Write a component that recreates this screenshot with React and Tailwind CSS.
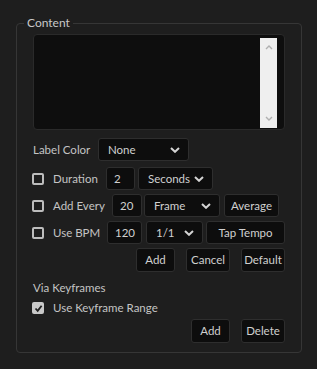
import React from 'react';

const font = { fontFamily: 'Lato, "Liberation Sans", sans-serif' };

function Chevron({ className = '' }) {
  return (
    <svg width="10" height="6" viewBox="0 0 10 6" className={className}>
      <polyline points="1,1 5,4.8 9,1" fill="none" stroke="#d4d4d4" strokeWidth="2" />
    </svg>
  );
}

function Box({ className = '', children }) {
  return (
    <div className={`flex items-center h-[23px] bg-[#0d0d0d] border border-[#2e2e2e] rounded-[3px] text-[#d0d0d0] ${className}`}>
      {children}
    </div>
  );
}

function Select({ label, className = '' }) {
  return (
    <Box className={`justify-between pl-[9px] pr-[8px] ${className}`}>
      <span>{label}</span>
      <Chevron />
    </Box>
  );
}

function Button({ label, className = '' }) {
  return <Box className={`justify-center ${className}`}>{label}</Box>;
}

function Check({ checked }) {
  if (checked) {
    return (
      <span className="flex items-center justify-center w-[12px] h-[12px] bg-[#c8c8c8] rounded-[2px]">
        <svg width="9" height="9" viewBox="0 0 9 9">
          <polyline points="1.5,4.5 3.7,6.8 7.6,1.8" fill="none" stroke="#1e1e1e" strokeWidth="1.8" />
        </svg>
      </span>
    );
  }
  return <span className="block w-[12px] h-[12px] border-2 border-[#bdbdbd] rounded-[2px]" />;
}

export default function App() {
  return (
    <div className="w-[317px] h-[369px] bg-[#1e1e1e] pt-[15px] pl-[16px] text-[11.5px] text-[#c4c4c4]" style={font}>
      <div className="mt-[8px] w-[286px] h-[330px] border border-[#363636] rounded-[4px] px-[16px]">
        {/* legend */}
        <div className="-mt-[9px] -ml-[9px] w-fit px-[3px] h-[16px] leading-[16px] bg-[#1e1e1e] text-[12px] text-[#c8c8c8]">Content</div>

        {/* text area */}
        <div className="mt-[3px] h-[96px] bg-[#0e0e0e] border border-[#2a2a2a] rounded-[4px] flex justify-end pt-[3px] pr-[7px]">
          <div className="w-[17px] h-[90px] bg-[#efefef] flex flex-col items-center justify-between py-[7px]">
            <svg width="8" height="5" viewBox="0 0 8 5">
              <polyline points="1,4 4,1 7,4" fill="none" stroke="#b0b0b0" strokeWidth="1.4" />
            </svg>
            <svg width="8" height="5" viewBox="0 0 8 5">
              <polyline points="1,1 4,4 7,1" fill="none" stroke="#b0b0b0" strokeWidth="1.4" />
            </svg>
          </div>
        </div>

        {/* label color */}
        <div className="mt-[8px] flex items-center">
          <span className="w-[65px]">Label Color</span>
          <Select label="None" className="w-[91px]" />
        </div>

        {/* duration */}
        <div className="mt-[6px] flex items-center -ml-[1px]">
          <Check />
          <span className="ml-[9px] w-[53px]">Duration</span>
          <Box className="w-[29px] px-[7px]">2</Box>
          <Select label="Seconds" className="ml-[3px] w-[75px]" />
        </div>

        {/* add every */}
        <div className="mt-[4px] flex items-center -ml-[1px]">
          <Check />
          <span className="ml-[9px] w-[59px]">Add Every</span>
          <Box className="w-[30px] px-[7px]">20</Box>
          <Select label="Frame" className="ml-[2px] w-[76px]" />
          <Button label="Average" className="ml-[4px] w-[55px]" />
        </div>

        {/* use bpm */}
        <div className="mt-[4px] flex items-center -ml-[1px]">
          <Check />
          <span className="ml-[9px] w-[54px]">Use BPM</span>
          <Box className="w-[35px] px-[7px]">120</Box>
          <Select label="1/1" className="ml-[4px] w-[57px]" />
          <Button label="Tap Tempo" className="ml-[3px] w-[79px]" />
        </div>

        {/* actions */}
        <div className="mt-[4px] flex justify-end gap-[11px]">
          <Button label="Add" className="w-[39px] h-[24px]" />
          <Button label="Cancel" className="w-[44px] h-[24px]" />
          <Button label="Default" className="w-[44px] h-[24px]" />
        </div>

        {/* keyframes */}
        <div className="mt-[8px] h-[16px] leading-[16px]">Via Keyframes</div>
        <div className="mt-[4px] h-[16px] flex items-center -ml-[1px]">
          <Check checked />
          <span className="ml-[9px]">Use Keyframe Range</span>
        </div>
        <div className="mt-[3px] flex justify-end gap-[11px]">
          <Button label="Add" className="w-[39px] h-[24px]" />
          <Button label="Delete" className="w-[44px] h-[24px]" />
        </div>
      </div>
    </div>
  );
}
